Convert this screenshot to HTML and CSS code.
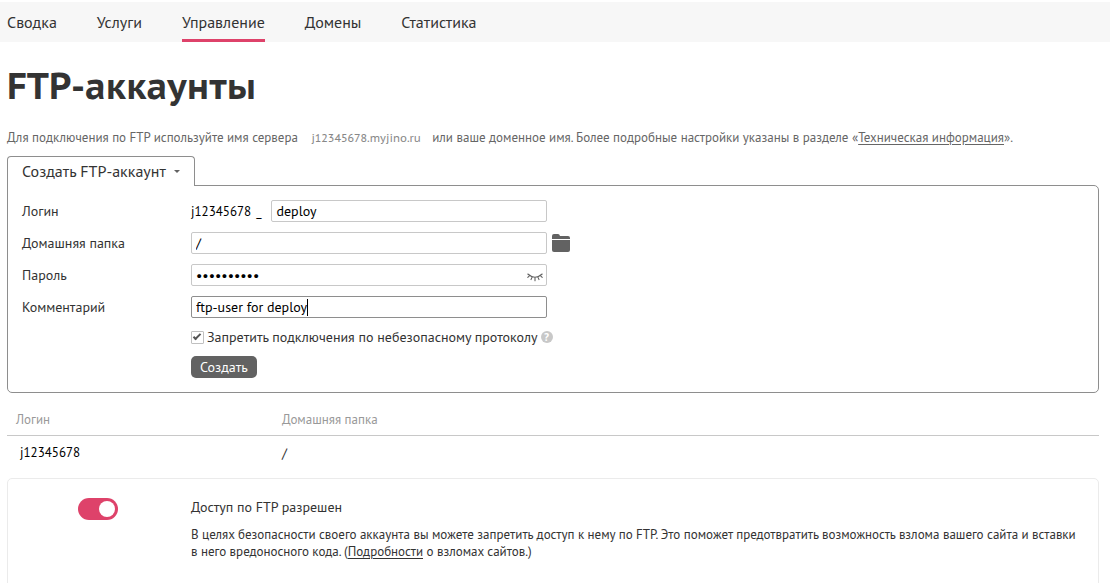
FILE: index.html
```html
<!DOCTYPE html>
<html lang="ru">
<head>
<meta charset="utf-8">
<title>FTP-аккаунты</title>
<link rel="stylesheet" href="styles.css">
</head>
<body>
<nav class="nav">
  <a class="nav-link" href="#">Сводка</a>
  <a class="nav-link" href="#">Услуги</a>
  <a class="nav-link nav-link-active" href="#">Управление</a>
  <a class="nav-link" href="#">Домены</a>
  <a class="nav-link" href="#">Статистика</a>
</nav>
<main class="main">
  <h1 class="title">FTP-аккаунты</h1>
  <p class="intro">Для подключения по FTP используйте имя сервера <span class="server">j12345678.myjino.ru</span> или ваше доменное имя. Более подробные настройки указаны в разделе «<a href="#">Техническая информация</a>».</p>

  <button class="tab" type="button">Создать FTP-аккаунт<span class="arrow"></span></button>
  <form class="panel">
    <label class="label" for="login">Логин</label>
    <div class="field field-login"><span class="prefix">j12345678</span><span class="underscore">_</span><input class="input" id="login" type="text" value="deploy"></div>

    <label class="label" for="home">Домашняя папка</label>
    <div class="field">
      <input class="input" id="home" type="text" value="/">
      <button class="folder" type="button" aria-label="Выбрать папку">
        <svg width="18" height="18" viewBox="0 0 18 18" fill="#626262"><path d="M0 5V2Q0 0 2 0H6Q7.5 0 8 2H16Q18 2 18 4V5Z"/><path d="M0 6H18V16Q18 18 16 18H2Q0 18 0 16Z"/></svg>
      </button>
    </div>

    <label class="label" for="password">Пароль</label>
    <div class="field">
      <input class="input" id="password" type="password" value="deploy1234">
      <button class="eye" type="button" aria-label="Показать пароль">
        <svg width="16" height="11" viewBox="0 0 16 11" fill="none" stroke="#626262" stroke-width="1.1" stroke-linecap="round"><path d="M.8 3Q8 9.4 15.2 3M2.6 4.6L.8 6.4M5.2 5.8L4 8.6M8 6.2V9.8M10.8 5.8L12 8.6M13.4 4.6L15.2 6.4"/></svg>
      </button>
    </div>

    <label class="label" for="comment">Комментарий</label>
    <div class="field field-comment"><input class="input input-focus" id="comment" type="text" value="ftp-user for deploy"><span class="caret"></span></div>

    <div class="field field-check">
      <input class="check" id="secure" type="checkbox" checked>
      <label for="secure">Запретить подключения по небезопасному протоколу</label>
      <span class="help">?</span>
    </div>
    <div class="field field-submit"><button class="submit" type="button">Создать</button></div>
  </form>

  <table class="accounts">
    <thead><tr><th class="col-login">Логин</th><th>Домашняя папка</th></tr></thead>
    <tbody><tr><td class="login">j12345678</td><td>/</td></tr></tbody>
  </table>

  <section class="access">
    <input class="switch" id="access" type="checkbox" role="switch" checked>
    <div class="access-body">
      <label class="access-title" for="access">Доступ по FTP разрешен</label>
      <p class="access-text">В целях безопасности своего аккаунта вы можете запретить доступ к нему по FTP. Это поможет предотвратить возможность взлома вашего сайта и вставки в него вредоносного кода. (<a href="#">Подробности</a> о взломах сайтов.)</p>
    </div>
  </section>
</main>
</body>
</html>
```
FILE: styles.css
```css
* { box-sizing: border-box; }
body {
  margin: 0;
  padding-top: 2px;
  overflow: hidden;
  background: #fff;
  color: #333;
  font: 14px/18px "PT Sans", "Noto Sans", "Open Sans", sans-serif;
}
a { color: inherit; text-underline-offset: 2px; }
button, input { font: inherit; margin: 0; }
button { padding: 0; border: 0; background: none; cursor: pointer; }

.nav { display: flex; gap: 40px; height: 40px; padding: 0 7px; background: #f7f7f7; }
.nav-link { height: 40px; border-bottom: 3px solid transparent; font-size: 16px; line-height: 40px; text-decoration: none; }
.nav-link-active { border-color: #de426a; }

.main { padding: 0 11px 0 7px; }
.title {
  margin: 20px 0 0;
  font-family: "PT Sans Caption", "Noto Sans", "Open Sans", sans-serif;
  font-size: 36px;
  line-height: 48px;
}
.intro { margin: 19px 0 9px; color: #666; font-size: 13px; line-height: 18px; }
.server {
  margin: 0 8px 0 10px;
  color: #888;
  font-family: "PT Sans Caption", "PT Sans", "Noto Sans", sans-serif;
  font-size: 11px;
}

.tab {
  position: relative;
  display: flex;
  align-items: center;
  gap: 8px;
  height: 30px;
  margin-bottom: -1px;
  padding: 0 14px 1px;
  border: 1px solid #8e8e8e;
  border-bottom: 0;
  border-radius: 4px 4px 0 0;
  background: #fff;
  color: #333;
  font-size: 16px;
}
.arrow { border: 3px solid transparent; border-top-color: #626262; border-bottom: 0; }

.panel {
  display: grid;
  grid-template-columns: 169px 1fr;
  row-gap: 10px;
  padding: 14px;
  border: 1px solid #8e8e8e;
  border-radius: 0 5px 5px 5px;
}
.label { line-height: 22px; }
.field { display: flex; align-items: center; gap: 5px; height: 22px; }
.input {
  width: 356px;
  height: 22px;
  padding: 0 4px;
  border: 1px solid #c8c8c8;
  border-radius: 2px;
  outline: 0;
  background: #fff;
  color: #000;
}
.input-focus { border-color: #8e8e8e; }
.field-comment { position: relative; }
.caret { position: absolute; left: 116px; top: 3px; width: 1px; height: 17px; background: #000; }
.field-login { width: 356px; color: #000; }
.prefix, .underscore { font-size: 13px; line-height: 20px; padding-top: 2px; }
.field-login .input { flex: 1; width: 0; margin-left: 5px; }
.folder { display: flex; }
.eye { display: flex; margin-left: -25px; padding-top: 2px; }
.field-check, .field-submit { grid-column: 2; }
.field-check { gap: 3px; height: 20px; margin-top: -1px; }
.field-submit { margin-top: -1px; }
.check {
  appearance: none;
  width: 13px;
  height: 13px;
  border: 1px solid #c0c0c0;
  border-radius: 1px;
}
.check:checked::before {
  content: "";
  display: block;
  width: 6px;
  height: 2px;
  margin: 2px 0 0 1px;
  border: solid #555;
  border-width: 0 0 2px 2px;
  transform: rotate(-45deg);
}
.help {
  width: 12px;
  height: 12px;
  border-radius: 50%;
  background: #c8c8c8;
  color: #fff;
  font-size: 11px;
  font-weight: bold;
  line-height: 12px;
  text-align: center;
}
.submit { height: 22px; padding: 0 9px; border-radius: 5px; background: #626262; color: #fff; }

.accounts { width: 100%; margin-top: 12px; border-collapse: collapse; }
.accounts th {
  height: 30px;
  padding: 0 9px;
  border-bottom: 1px solid #c8c8c8;
  color: #999;
  font-size: 13px;
  font-weight: normal;
  text-align: left;
}
.accounts td { height: 36px; padding: 0 9px; }
.col-login { width: 266px; }
.accounts .login { padding-left: 13px; color: #000; font-size: 13px; }

.access {
  display: flex;
  min-height: 128px;
  margin-top: 7px;
  padding: 19px 22px 19px 70px;
  border: 1px solid #ebebeb;
  border-radius: 5px;
}
.switch {
  appearance: none;
  flex: none;
  width: 40px;
  height: 22px;
  margin-right: 73px;
  padding: 3px;
  border-radius: 11px;
  background: #de426a;
}
.switch:checked::before {
  content: "";
  display: block;
  width: 16px;
  height: 16px;
  margin-left: auto;
  border-radius: 50%;
  background: #fff;
}
.access-title { display: block; }
.access-text { margin: 10px 0 0; font-size: 13px; line-height: 17px; }
```
